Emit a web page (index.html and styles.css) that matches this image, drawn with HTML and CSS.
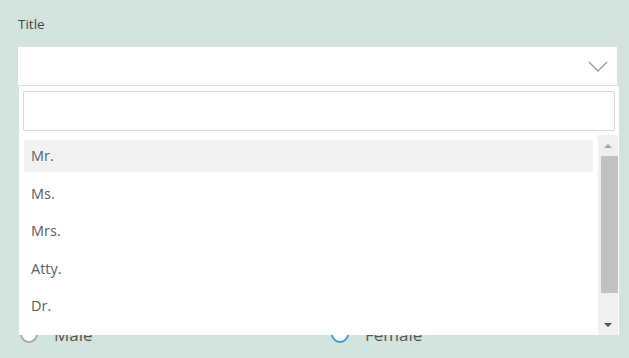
FILE: index.html
```html
<!DOCTYPE html>
<html>
<head>
<meta charset="utf-8">
<link rel="stylesheet" href="styles.css">
</head>
<body>
<div class="page">
  <div class="label">Title</div>
  <div class="field">
    <div class="select">
      <svg class="chev" width="20" height="12" viewBox="0 0 20 12"><path d="M1 1 L10 10 L19 1" fill="none" stroke="#9a9a9a" stroke-width="1.4"/></svg>
    </div>
    <div class="dropdown">
      <div class="search"></div>
      <div class="listwrap">
        <ul class="list">
          <li class="item active">Mr.</li>
          <li class="item">Ms.</li>
          <li class="item">Mrs.</li>
          <li class="item">Atty.</li>
          <li class="item">Dr.</li>
        </ul>
        <div class="scrollbar">
          <div class="arrow up"></div>
          <div class="thumb"></div>
          <div class="spacer"></div>
          <div class="arrow down"></div>
        </div>
      </div>
    </div>
  </div>
  <div class="radios">
    <label class="radio"><span class="circle"></span><span class="rtext">Male</span></label>
    <label class="radio"><span class="circle checked"></span><span class="rtext">Female</span></label>
  </div>
</div>
</body>
</html>
```
FILE: styles.css
```css
html, body { margin: 0; padding: 0; }
body {
  background: #d3e4df;
  width: 629px;
  height: 358px;
  overflow: hidden;
  font-family: "Open Sans", "Noto Sans", sans-serif;
}
.page {
  padding: 14px 12px 0 18px;
}
.label {
  font-size: 13.5px;
  color: #444;
  line-height: 20px;
  height: 20px;
  margin-bottom: 13px;
}
.field {
  position: relative;
  width: 599px;
}
.select {
  height: 38px;
  background: #fff;
  border-bottom: 1px solid #dcdcdc;
  display: flex;
  align-items: center;
  justify-content: flex-end;
  padding-right: 9px;
}
.chev { display: block; margin-top: 1px; }
.dropdown {
  position: absolute;
  top: 39px;
  left: 1px;
  width: 600px;
  height: 249px;
  background: #fff;
  box-sizing: border-box;
  padding: 5px 0 0 4px;
  display: flex;
  flex-direction: column;
  z-index: 2;
}
.search {
  width: 592px;
  height: 40px;
  box-sizing: border-box;
  border: 1px solid #d6d6d6;
  border-radius: 2px;
  flex: none;
}
.listwrap {
  margin-top: 4px;
  margin-left: -4px;
  flex: 1;
  display: flex;
}
.list {
  list-style: none;
  margin: 0;
  padding: 5px 5px 0 5px;
  flex: 1;
}
.item {
  height: 32px;
  line-height: 32px;
  padding-left: 7px;
  margin-bottom: 5.5px;
  font-size: 14.5px;
  color: #5a5c68;
}
.item.active { background: #f2f2f2; }
.scrollbar {
  width: 20px;
  margin-right: 1px;
  background: #f0f0f0;
  display: flex;
  flex-direction: column;
  align-items: center;
}
.arrow {
  height: 21px;
  flex: none;
  display: flex;
  align-items: center;
  justify-content: center;
}
.arrow::before {
  content: "";
  width: 0; height: 0;
  border-left: 4px solid transparent;
  border-right: 4px solid transparent;
}
.arrow.up::before { border-bottom: 4px solid #a3a3a3; margin-top: 1px; }
.arrow.down::before { border-top: 4px solid #505050; }
.thumb {
  width: 17px;
  margin-left: 2px;
  height: 137px;
  background: #c1c1c1;
  flex: none;
}
.spacer { flex: 1; }
.radios {
  display: flex;
  margin-top: 237px;
  height: 22px;
  align-items: center;
}
.radio {
  display: flex;
  align-items: center;
  gap: 16px;
  font-size: 17px;
  color: #555;
}
.radio:first-child { width: 311px; margin-left: 2px; }
.circle {
  width: 18px; height: 18px;
  box-sizing: border-box;
  border-radius: 50%;
  border: 2px solid #a5a5a5;
  background: #fff;
  flex: none;
}
.circle.checked { border-color: #3d9bdc; }
```
